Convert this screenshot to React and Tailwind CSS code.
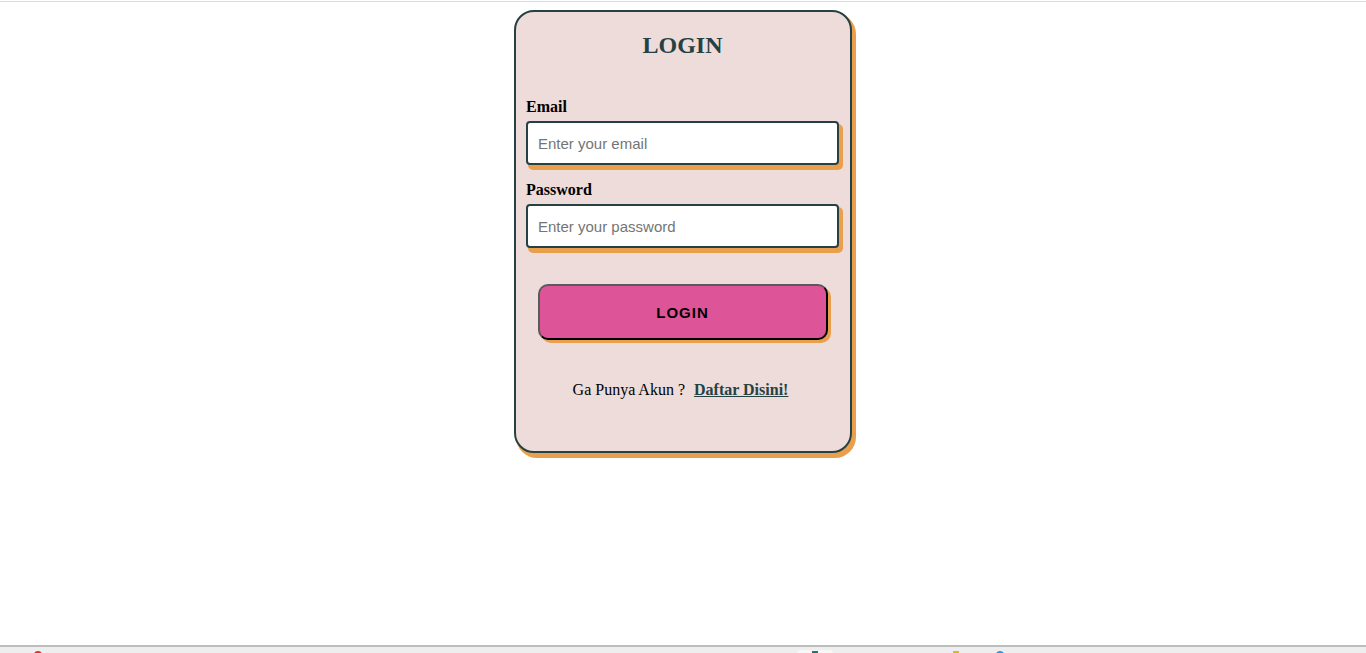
export default function App() {
  return (
    <div className="h-[653px] w-full flex flex-col bg-white overflow-hidden">
      <div className="h-px mt-px bg-[#dcdcdc] shrink-0" />
      <main className="flex-1 flex flex-col items-center pt-[8px]">
        <form
          onSubmit={(e) => e.preventDefault()}
          className="w-[338px] h-[443px] bg-[#EDDCD9] border-2 border-[#264143] rounded-[20px] shadow-[3px_4px_0px_1px_#E99F4C] pl-[10px] pr-[11px] pt-[19px] flex flex-col"
          style={{ fontFamily: '"Liberation Serif", "Times New Roman", serif' }}
        >
          <p className="text-center text-[24px] leading-[28px] font-black text-[#264143]">LOGIN</p>
          <label className="mt-[39px] mb-[5px] text-[16px] leading-[18px] font-bold text-black">Email</label>
          <input
            type="text"
            placeholder="Enter your email"
            className="h-[44px] w-full bg-white border-2 border-[#264143] rounded-[4px] shadow-[3px_4px_0px_1px_#E99F4C] pl-[10px] text-[15px] outline-none placeholder:text-[#757575]"
            style={{ fontFamily: '"Liberation Sans", Arial, sans-serif' }}
          />
          <label className="mt-[16px] mb-[5px] text-[16px] leading-[18px] font-bold text-black">Password</label>
          <input
            type="password"
            placeholder="Enter your password"
            className="h-[44px] w-full bg-white border-2 border-[#264143] rounded-[4px] shadow-[3px_4px_0px_1px_#E99F4C] pl-[10px] text-[15px] outline-none placeholder:text-[#757575]"
            style={{ fontFamily: '"Liberation Sans", Arial, sans-serif' }}
          />
          <button
            type="submit"
            className="mt-[36px] mx-auto w-[290px] h-[56px] pt-[2px] bg-[#DE5499] rounded-[10px] border-2 border-t-[#5a5a5a] border-l-[#5a5a5a] border-r-black border-b-black shadow-[3px_3px_0px_0px_#E99F4C] text-[15px] font-extrabold tracking-[1px] text-black"
            style={{ fontFamily: '"Liberation Sans", Arial, sans-serif' }}
          >
            LOGIN
          </button>
          <p className="mt-[41px] pr-[4px] text-center text-[16px] leading-[18px] text-black">
            Ga Punya Akun ?
            <a href="#" className="ml-[9px] font-bold underline text-[#264143]">
              Daftar Disini!
            </a>
          </p>
        </form>
      </main>
      <div className="h-[8px] shrink-0 border-t-2 border-[#bdbdbd] bg-[#eeeeee]">
        <div className="flex items-start h-full">
          <div className="ml-[34px] mt-[4px] w-[8px] h-[4px] rounded-t-full bg-[#d32f2f]" />
          <div className="ml-[755px] mt-[3px] w-[36px] h-[5px] rounded-t-[4px] bg-[#f7f7f7] flex justify-center">
            <div className="mt-[1px] w-[6px] h-[4px] bg-[#1e7b6e]" />
          </div>
          <div className="ml-[120px] mt-[4px] w-[6px] h-[4px] bg-[#e3b32a]" />
          <div className="ml-[37px] mt-[4px] w-[8px] h-[4px] rounded-t-full bg-[#2196f3]" />
        </div>
      </div>
    </div>
  );
}
